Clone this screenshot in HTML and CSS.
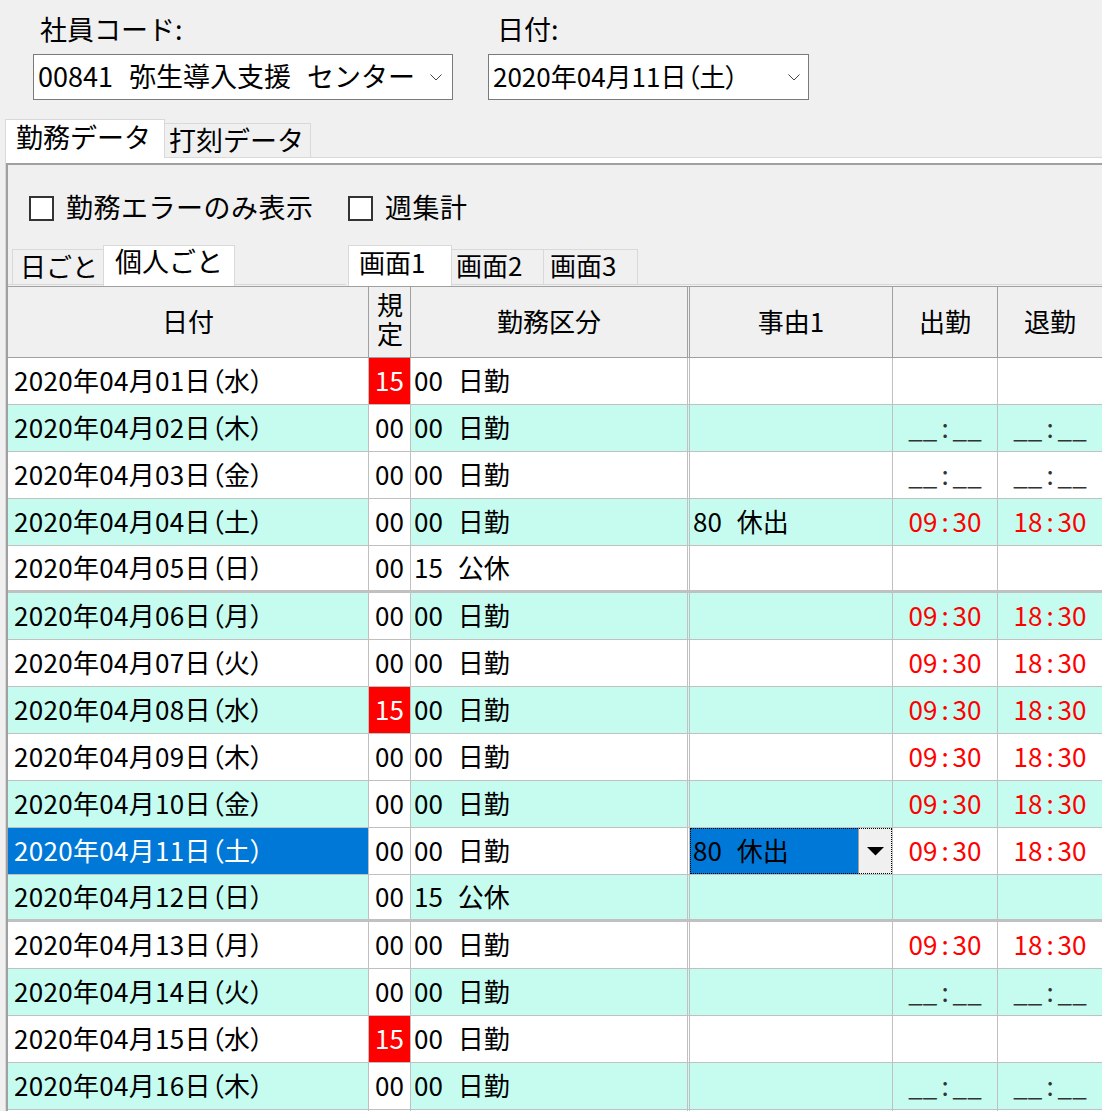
FILE: index.html
```html
<!DOCTYPE html>
<html lang="ja">
<head>
<meta charset="utf-8">
<title>勤務データ</title>
<link rel="stylesheet" href="styles.css">
</head>
<body>
<div class="top">
  <div class="field f1">
    <div class="label">社員コード:</div>
    <div class="combo c-emp">
      <span class="combo-text">00841 弥生導入支援 センター</span>
      <svg class="chev" width="12" height="7" viewBox="0 0 12 7"><polyline points="0.5,0.5 6,6 11.5,0.5" fill="none" stroke="#444" stroke-width="1"/></svg>
    </div>
  </div>
  <div class="field f2">
    <div class="label">日付:</div>
    <div class="combo c-date">
      <span class="combo-text">2020年04月11日（土）</span>
      <svg class="chev" width="12" height="7" viewBox="0 0 12 7"><polyline points="0.5,0.5 6,6 11.5,0.5" fill="none" stroke="#444" stroke-width="1"/></svg>
    </div>
  </div>
</div>

<div class="tabstrip">
  <div class="tab tab-sel">勤務データ</div>
  <div class="tab tab-off">打刻データ</div>
  <div class="tab-fill"></div>
</div>

<div class="tabbody">
  <div class="panel">
    <div class="checks">
      <div class="check check-first"><span class="cb"></span><span class="cb-label">勤務エラーのみ表示</span></div>
      <div class="check"><span class="cb"></span><span class="cb-label">週集計</span></div>
    </div>

    <div class="subtabs">
      <div class="st-lead"></div>
      <div class="st st-day">日ごと</div>
      <div class="st st-person">個人ごと</div>
      <div class="st-fill1"></div>
      <div class="st-gap"></div>
      <div class="st st-g1">画面1</div>
      <div class="st st-g2">画面2</div>
      <div class="st st-g3">画面3</div>
      <div class="st-fill2"></div>
    </div>

    <div class="grid">
      <div class="hdr">
        <div class="c1">日付</div>
        <div class="c2 kitei"><span class="vert">規定</span></div>
        <div class="c3">勤務区分</div>
        <div class="c4">事由1</div>
        <div class="c5">出勤</div>
        <div class="c6">退勤</div>
      </div>

      <div class="row">
        <div class="c1">2020年04月01日（水）</div><div class="c2 red">15</div><div class="c3">00 日勤</div><div class="c4"></div><div class="c5"></div><div class="c6"></div>
      </div>
      <div class="row alt">
        <div class="c1">2020年04月02日（木）</div><div class="c2">00</div><div class="c3">00 日勤</div><div class="c4"></div><div class="c5 blank">__<span class="colon">:</span>__</div><div class="c6 blank">__<span class="colon">:</span>__</div>
      </div>
      <div class="row">
        <div class="c1">2020年04月03日（金）</div><div class="c2">00</div><div class="c3">00 日勤</div><div class="c4"></div><div class="c5 blank">__<span class="colon">:</span>__</div><div class="c6 blank">__<span class="colon">:</span>__</div>
      </div>
      <div class="row alt">
        <div class="c1">2020年04月04日（土）</div><div class="c2">00</div><div class="c3">00 日勤</div><div class="c4">80 休出</div><div class="c5 time">09<span class="colon">:</span>30</div><div class="c6 time">18<span class="colon">:</span>30</div>
      </div>
      <div class="row sep">
        <div class="c1">2020年04月05日（日）</div><div class="c2">00</div><div class="c3">15 公休</div><div class="c4"></div><div class="c5"></div><div class="c6"></div>
      </div>
      <div class="row alt">
        <div class="c1">2020年04月06日（月）</div><div class="c2">00</div><div class="c3">00 日勤</div><div class="c4"></div><div class="c5 time">09<span class="colon">:</span>30</div><div class="c6 time">18<span class="colon">:</span>30</div>
      </div>
      <div class="row">
        <div class="c1">2020年04月07日（火）</div><div class="c2">00</div><div class="c3">00 日勤</div><div class="c4"></div><div class="c5 time">09<span class="colon">:</span>30</div><div class="c6 time">18<span class="colon">:</span>30</div>
      </div>
      <div class="row alt">
        <div class="c1">2020年04月08日（水）</div><div class="c2 red">15</div><div class="c3">00 日勤</div><div class="c4"></div><div class="c5 time">09<span class="colon">:</span>30</div><div class="c6 time">18<span class="colon">:</span>30</div>
      </div>
      <div class="row">
        <div class="c1">2020年04月09日（木）</div><div class="c2">00</div><div class="c3">00 日勤</div><div class="c4"></div><div class="c5 time">09<span class="colon">:</span>30</div><div class="c6 time">18<span class="colon">:</span>30</div>
      </div>
      <div class="row alt">
        <div class="c1">2020年04月10日（金）</div><div class="c2">00</div><div class="c3">00 日勤</div><div class="c4"></div><div class="c5 time">09<span class="colon">:</span>30</div><div class="c6 time">18<span class="colon">:</span>30</div>
      </div>
      <div class="row sel">
        <div class="c1">2020年04月11日（土）</div><div class="c2">00</div><div class="c3">00 日勤</div>
        <div class="c4 edit-cell">
          <div class="editor">
            <span class="ed-text">80 休出</span>
            <span class="ed-btn"><svg width="17" height="9" viewBox="0 0 17 9"><polygon points="0,0 17,0 8.5,8.5" fill="#000"/></svg></span>
          </div>
        </div>
        <div class="c5 time">09<span class="colon">:</span>30</div><div class="c6 time">18<span class="colon">:</span>30</div>
      </div>
      <div class="row alt sep">
        <div class="c1">2020年04月12日（日）</div><div class="c2">00</div><div class="c3">15 公休</div><div class="c4"></div><div class="c5"></div><div class="c6"></div>
      </div>
      <div class="row">
        <div class="c1">2020年04月13日（月）</div><div class="c2">00</div><div class="c3">00 日勤</div><div class="c4"></div><div class="c5 time">09<span class="colon">:</span>30</div><div class="c6 time">18<span class="colon">:</span>30</div>
      </div>
      <div class="row alt">
        <div class="c1">2020年04月14日（火）</div><div class="c2">00</div><div class="c3">00 日勤</div><div class="c4"></div><div class="c5 blank">__<span class="colon">:</span>__</div><div class="c6 blank">__<span class="colon">:</span>__</div>
      </div>
      <div class="row">
        <div class="c1">2020年04月15日（水）</div><div class="c2 red">15</div><div class="c3">00 日勤</div><div class="c4"></div><div class="c5"></div><div class="c6"></div>
      </div>
      <div class="row alt">
        <div class="c1">2020年04月16日（木）</div><div class="c2">00</div><div class="c3">00 日勤</div><div class="c4"></div><div class="c5 blank">__<span class="colon">:</span>__</div><div class="c6 blank">__<span class="colon">:</span>__</div>
      </div>
      <div class="row">
        <div class="c1"></div><div class="c2"></div><div class="c3"></div><div class="c4"></div><div class="c5"></div><div class="c6"></div>
      </div>
    </div>
  </div>
</div>
</body>
</html>
```

FILE: styles.css
```css
html, body {
  margin: 0;
  padding: 0;
  width: 1102px;
  height: 1111px;
  overflow: hidden;
  background: #f0f0f0;
  color: #000;
  font-family: "Noto Sans CJK JP", sans-serif;
}

/* ---------- top fields ---------- */
.top {
  display: flex;
  padding-top: 11px;
  padding-left: 33px;
}
.f2 { margin-left: 35px; }

.label {
  font-size: 27px;
  line-height: 36px;
  height: 36px;
  padding-left: 7px;
  white-space: nowrap;
}
.f2 .label { padding-left: 9px; }

.combo {
  margin-top: 7px;
  height: 46px;
  box-sizing: border-box;
  border: 1px solid #7a7a7a;
  background: #fff;
  display: flex;
  align-items: center;
  padding-left: 4px;
}
.c-emp { width: 420px; padding-right: 10px; }
.c-date { width: 321px; padding-right: 8px; }

.combo-text {
  flex: 1;
  white-space: pre;
  line-height: 32px;
  padding-bottom: 3px;
}
.c-emp .combo-text { font-size: 27px; word-spacing: 10px; }
.c-date .combo-text { font-size: 26px; font-feature-settings: "palt"; }
.chev { flex: none; }

/* ---------- main tabs ---------- */
.tabstrip {
  display: flex;
  align-items: flex-end;
  height: 58px;
  padding-left: 5px;
}
.tab {
  box-sizing: border-box;
  font-size: 27px;
  display: flex;
  align-items: center;
  white-space: nowrap;
}
.tab-sel {
  width: 160px;
  height: 39px;
  background: #fff;
  border: 1px solid #d9d9d9;
  border-bottom: none;
  padding-left: 10px;
  padding-bottom: 6px;
}
.tab-off {
  width: 146px;
  height: 35px;
  background: #f0f0f0;
  border: 1px solid #d9d9d9;
  border-left: none;
  padding-left: 4px;
  padding-bottom: 2px;
}
.tab-fill {
  flex: 1;
  height: 0;
  border-bottom: 1px solid #d9d9d9;
}

.tabbody {
  margin-left: 5px;
  border-left: 1px solid #d9d9d9;
  background: #fff;
  padding-top: 5px;
}
.panel {
  border-top: 2px solid #a0a0a0;
  border-left: 2px solid #a0a0a0;
  background: #f0f0f0;
}

/* ---------- checkboxes ---------- */
.checks {
  display: flex;
  align-items: center;
  height: 25px;
  margin-top: 31px;
  padding-left: 21px;
}
.check {
  display: flex;
  align-items: center;
}
.check-first { width: 319px; }
.cb {
  width: 25px;
  height: 25px;
  box-sizing: border-box;
  border: 2px solid #333;
  background: #fff;
  flex: none;
}
.cb-label {
  margin-left: 12px;
  font-size: 27px;
  line-height: 30px;
  padding-bottom: 3px;
  white-space: nowrap;
  letter-spacing: 0.5px;
}

/* ---------- sub tabs ---------- */
.subtabs {
  display: flex;
  align-items: flex-end;
  height: 41px;
  margin-top: 24px;
}
.st {
  box-sizing: border-box;
  font-size: 26px;
  display: flex;
  align-items: center;
  white-space: nowrap;
}
.st-lead {
  width: 4px;
  height: 0;
  border-bottom: 1px solid #d9d9d9;
  margin-bottom: 1px;
}
.st-day {
  width: 91px;
  height: 36px;
  border: 1px solid #d9d9d9;
  border-right: none;
  background: #f0f0f0;
  padding-left: 7px;
  padding-bottom: 4px;
  margin-bottom: 1px;
}
.st-person {
  width: 132px;
  height: 41px;
  border: 1px solid #d9d9d9;
  border-bottom: none;
  background: #fff;
  padding-left: 11px;
  padding-bottom: 11px;
  font-size: 27px;
}
.st-fill1 {
  width: 111px;
  height: 0;
  border-bottom: 1px solid #d9d9d9;
  margin-bottom: 1px;
}
.st-gap { width: 2px; }
.st-g1 {
  width: 104px;
  height: 41px;
  border: 1px solid #d9d9d9;
  border-bottom: none;
  background: #fff;
  padding-left: 10px;
  padding-bottom: 9px;
}
.st-g2, .st-g3 {
  height: 36px;
  border: 1px solid #d9d9d9;
  border-left: none;
  background: #f0f0f0;
  margin-bottom: 1px;
  padding-bottom: 5px;
}
.st-g2 { width: 92px; padding-left: 4px; }
.st-g3 { width: 94px; padding-left: 6px; }
.st-fill2 {
  flex: 1;
  height: 0;
  border-bottom: 1px solid #d9d9d9;
  margin-bottom: 1px;
}

/* ---------- grid ---------- */
.grid {
  border-top: 1px solid #a0a0a0;
  width: 1095px;
}
.hdr, .row {
  display: grid;
  grid-template-columns: 361px 42px 279px 203px 105px 105px;
  box-sizing: border-box;
}
.hdr {
  height: 71px;
  border-bottom: 1px solid #a0a0a0;
  background: #f0f0f0;
}
.hdr > div {
  border-right: 1px solid #a0a0a0;
  display: flex;
  align-items: center;
  justify-content: center;
  font-size: 26px;
  white-space: nowrap;
  padding-bottom: 4px;
}
.hdr > .c3 { border-right: 3px double #a0a0a0; }
.hdr > .kitei { padding-bottom: 2px; }
.vert {
  writing-mode: vertical-rl;
  text-orientation: upright;
  letter-spacing: 3px;
  line-height: 30px;
}

.row {
  height: 47px;
  border-bottom: 1px solid #c0c0c0;
  background: #fff;
  font-size: 26px;
  line-height: 30px;
}
.row.alt { background: #c6fcf0; }
.row.sep { border-bottom-width: 3px; }

.row > div {
  border-right: 1px solid #c0c0c0;
  display: flex;
  align-items: center;
  white-space: pre;
  overflow: hidden;
  padding-bottom: 3px;
}
.row > .c1 { padding-left: 6px; font-feature-settings: "palt"; letter-spacing: 0.3px; }
.row > .c2 { justify-content: center; background: #fff; }
.row > .c2.red { background: #ff0000; color: #fff; }
.row > .c3 {
  padding-left: 3px;
  border-right: 3px double #c0c0c0;
  word-spacing: 9px;
}
.row > .c4 { padding-left: 3px; word-spacing: 9px; }
.row > .c5, .row > .c6 { justify-content: center; }

.time { color: #ff0000; }
.blank { color: #333; }
.colon { margin: 0 4px; }

.row.sel > .c1 { background: #0078d7; color: #fff; }

.row > .edit-cell { padding: 0; }
.editor {
  display: flex;
  width: 100%;
  height: 100%;
  outline: 1px dotted #000;
  outline-offset: -1px;
}
.ed-text {
  flex: 1;
  display: flex;
  align-items: center;
  background: #0078d7;
  color: #000;
  padding-left: 3px;
  padding-bottom: 3px;
  word-spacing: 9px;
  white-space: pre;
}
.ed-btn {
  width: 33px;
  flex: none;
  background: #f0f0f0;
  border-left: 1px solid #a0a0a0;
  display: flex;
  align-items: center;
  justify-content: center;
}
```
